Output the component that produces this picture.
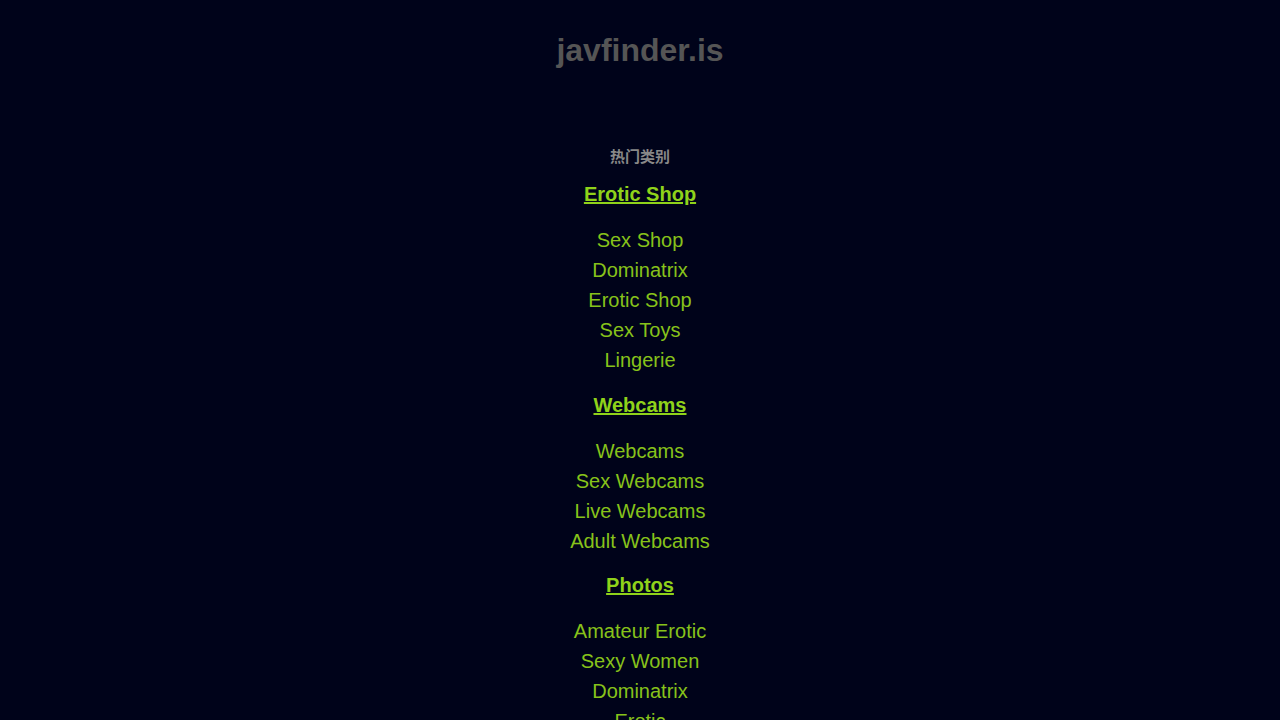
const CATEGORIES: { title: string; items: string[] }[] = [
  { title: 'Erotic Shop', items: ['Sex Shop', 'Dominatrix', 'Erotic Shop', 'Sex Toys', 'Lingerie'] },
  { title: 'Webcams', items: ['Webcams', 'Sex Webcams', 'Live Webcams', 'Adult Webcams'] },
  { title: 'Photos', items: ['Amateur Erotic', 'Sexy Women', 'Dominatrix', 'Erotic', 'Nude Photos'] },
]

export default function App() {
  return (
    <div
      className="min-h-screen bg-[#00031a] text-center"
      style={{ fontFamily: '"Liberation Sans", Arial, "Noto Sans CJK SC", sans-serif' }}
    >
      <h1 className="pt-[32px] text-[32px] font-bold leading-[37px] text-[#555555]">javfinder.is</h1>

      <div className="pt-[79px]">
        <h2
          className="text-[15px] font-bold leading-[17px] text-[#888888]"
          style={{ fontFamily: '"Liberation Sans", "Noto Sans CJK SC", sans-serif' }}
        >
          热门类别
        </h2>

        {CATEGORIES.map((cat) => (
          <section key={cat.title}>
            <h3 className="mt-[17.3px] mb-[19px] text-[20px] font-bold leading-[24px] text-[#8fd21a]">
              <a href="#" className="underline">
                {cat.title}
              </a>
            </h3>
            <ul>
              {cat.items.map((item, i) => (
                <li key={i} className="text-[20px] leading-[30px]">
                  <a href="#" className="text-[#87c21a]">
                    {item}
                  </a>
                </li>
              ))}
            </ul>
          </section>
        ))}
      </div>
    </div>
  )
}
